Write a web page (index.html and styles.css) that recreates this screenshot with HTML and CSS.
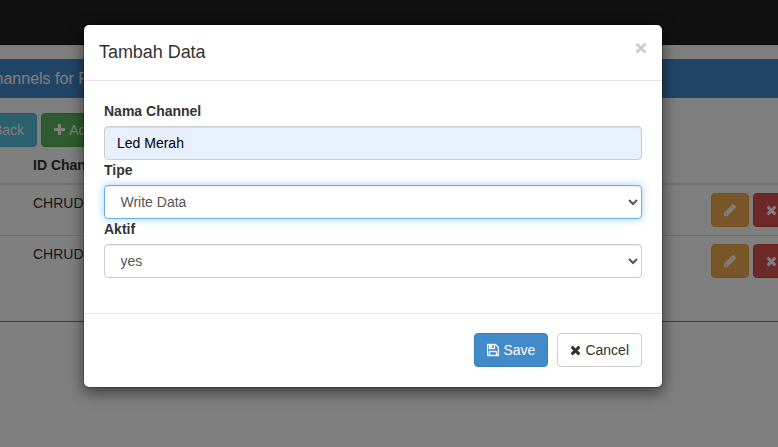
FILE: index.html
```
<!DOCTYPE html>
<html lang="id">
<head>
<meta charset="utf-8">
<title>Tambah Data</title>
<link rel="stylesheet" href="styles.css">
</head>
<body>
<svg class="sprite" aria-hidden="true">
  <symbol id="save" viewBox="0 0 1536 1792"><path d="M384 1536h768v-384h-768v384zm896 0h128v-896q0-14-10-38.500t-20-34.500l-281-281q-10-10-34-20t-39-10v416q0 40-28 68t-68 28h-576q-40 0-68-28t-28-68v-416h-128v1280h128v-416q0-40 28-68t68-28h832q40 0 68 28t28 68v416zm-384-928v-320q0-13-9.500-22.500t-22.500-9.500h-192q-13 0-22.500 9.500t-9.500 22.500v320q0 13 9.500 22.500t22.500 9.500h192q13 0 22.500-9.500t9.500-22.500zm640 32v928q0 40-28 68t-68 28h-1344q-40 0-68-28t-28-68v-1344q0-40 28-68t68-28h928q40 0 88 20t76 48l280 280q28 28 48 76t20 88z"/></symbol>
  <symbol id="times" viewBox="192 0 1408 1792"><path d="M1490 1322q0 40-28 68l-136 136q-28 28-68 28t-68-28l-294-294-294 294q-28 28-68 28t-68-28l-136-136q-28-28-28-68t28-68l294-294-294-294q-28-28-28-68t28-68l136-136q28-28 68-28t68 28l294 294 294-294q28-28 68-28t68 28l136 136q28 28 28 68t-28 68l-294 294 294 294q28 28 28 68z"/></symbol>
  <symbol id="plus" viewBox="192 0 1408 1792"><path d="M1600 736v192q0 40-28 68t-68 28h-416v416q0 40-28 68t-68 28h-192q-40 0-68-28t-28-68v-416h-416q-40 0-68-28t-28-68v-192q0-40 28-68t68-28h416v-416q0-40 28-68t68-28h192q40 0 68 28t28 68v416h416q40 0 68 28t28 68z"/></symbol>
  <symbol id="pencil" viewBox="128 0 1536 1792"><path d="M491 1536l91-91-235-235-91 91v107h128v128h107zm523-928q0-22-22-22-10 0-17 7l-542 542q-7 7-7 17 0 22 22 22 10 0 17-7l542-542q7-7 7-17zm-54-192l416 416-832 832h-416v-416zm683 96q0 53-37 90l-166 166-416-416 166-165q36-38 90-38 53 0 91 38l235 234q37 39 37 91z"/></symbol>
</svg>
<nav class="navbar"></nav>
<main class="page">
  <section class="panel">
    <h3 class="panel-heading">Channels for R</h3>
    <div class="panel-body">
      <div class="toolbar">
        <button class="btn btn-info">Back</button>
        <button class="btn btn-success"><svg class="icon"><use href="#plus"/></svg>Add</button>
      </div>
      <table class="table">
        <thead><tr><th class="col-no"></th><th>ID Channel</th><th class="col-action"></th></tr></thead>
        <tbody>
          <tr><td></td><td>CHRUD</td><td><div class="actions"><button class="btn btn-warning"><svg class="icon icon-wide icon-heavy"><use href="#pencil"/></svg></button><button class="btn btn-danger"><svg class="icon"><use href="#times"/></svg></button></div></td></tr>
          <tr><td></td><td>CHRUD</td><td><div class="actions"><button class="btn btn-warning"><svg class="icon icon-wide icon-heavy"><use href="#pencil"/></svg></button><button class="btn btn-danger"><svg class="icon"><use href="#times"/></svg></button></div></td></tr>
        </tbody>
      </table>
    </div>
  </section>
</main>
<div class="backdrop">
  <div class="modal">
    <header class="modal-header"><h4 class="modal-title">Tambah Data</h4><button class="close">×</button></header>
    <form class="modal-body">
      <label for="nama">Nama Channel</label>
      <input class="field autofilled" id="nama" type="text" value="Led Merah">
      <label for="tipe">Tipe</label>
      <select class="field focused" id="tipe"><option>Write Data</option></select>
      <label for="aktif">Aktif</label>
      <select class="field" id="aktif"><option>yes</option></select>
    </form>
    <footer class="modal-footer">
      <button class="btn btn-primary"><svg class="icon icon-wide icon-heavy"><use href="#save"/></svg>Save</button>
      <button class="btn btn-default"><svg class="icon"><use href="#times"/></svg>Cancel</button>
    </footer>
  </div>
</div>
</body>
</html>
```
FILE: styles.css
```
* { box-sizing: border-box; }
html, body { height: 100%; }
body {
  margin: 0;
  overflow: hidden;
  background: #fff;
  color: #333;
  font: 14px/20px "Liberation Sans", Arial, sans-serif;
}
button, input, select { font: inherit; }
.sprite { display: none; }
.icon { width: 11px; height: 14px; fill: currentColor; flex: none; }
.icon-wide { width: 12px; }
.icon-heavy { stroke: currentColor; stroke-width: 50px; }

.navbar { height: 45px; background: #222; border-bottom: 1px solid #080808; }

.page { width: 900px; margin: 14px 0 0 -32px; }
.panel { height: 263px; border: 1px solid #428bca; border-top: 0; }
.panel-heading {
  margin: 0;
  height: 39px;
  padding: 0 14px;
  background: #428bca;
  color: #fff;
  font-size: 16px;
  font-weight: normal;
  line-height: 39px;
}
.panel-body { padding: 15px 0 0; }
.toolbar { display: flex; gap: 4px; padding-left: 11px; }

.btn {
  display: inline-flex;
  align-items: center;
  gap: 4px;
  height: 34px;
  padding: 0 12px;
  border: 1px solid transparent;
  border-radius: 4px;
  color: #fff;
  white-space: nowrap;
}
.btn-info { background: #5bc0de; border-color: #46b8da; }
.btn-success { background: #5cb85c; border-color: #4cae4c; }
.btn-warning { background: #f0ad4e; border-color: #eea236; }
.btn-danger { background: #d9534f; border-color: #d43f3a; }
.btn-primary { background: #428bca; border-color: #357ebd; }
.btn-default { background: #fff; border-color: #ccc; color: #333; }

.table { width: 100%; table-layout: fixed; border-collapse: separate; border-spacing: 0; }
.table th { height: 38px; padding: 8px; text-align: left; border-bottom: 2px solid #ddd; }
.table td { height: 51px; padding: 8px; vertical-align: top; border-bottom: 1px solid #ddd; }
.table tr:last-child td { border-bottom: 0; }
.col-no { width: 56px; }
.col-action { width: 164px; }
.actions { display: flex; gap: 4px; }

.backdrop { position: absolute; inset: 0; background: rgba(0, 0, 0, .5); }
.modal {
  width: 580px;
  height: 364px;
  margin: 24px 0 0 83px;
  display: flex;
  flex-direction: column;
  background: #fff;
  background-clip: padding-box;
  border: 1px solid rgba(0, 0, 0, .2);
  border-radius: 6px;
  box-shadow: 0 5px 15px rgba(0, 0, 0, .5);
}
.modal-header {
  display: flex;
  justify-content: space-between;
  height: 56px;
  padding: 12px 15px 0;
  border-bottom: 1px solid #e5e5e5;
}
.modal-title { margin: 0; font-size: 18px; font-weight: 500; line-height: 30px; letter-spacing: -.05px; }
.close {
  height: 21px;
  padding: 0;
  border: 0;
  background: none;
  color: #000;
  opacity: .2;
  font-size: 21px;
  font-weight: bold;
  line-height: 21px;
  -webkit-text-stroke: .4px #000;
}
.modal-body { flex: 1; padding: 20px; }
.modal-body label { display: block; margin-bottom: 5px; font-weight: bold; }
.field {
  display: block;
  width: 100%;
  height: 34px;
  padding: 6px 12px;
  background: #fff;
  border: 1px solid #ccc;
  border-radius: 4px;
  color: #555;
  box-shadow: inset 0 1px 1px rgba(0, 0, 0, .075);
}
select.field { padding-left: 11.5px; }
.autofilled { background: #e8f0fe; color: #000; }
.focused {
  border-color: #66afe9;
  box-shadow: inset 0 1px 1px rgba(0, 0, 0, .075), 0 0 8px rgba(102, 175, 233, .6);
}
.modal-footer {
  display: flex;
  justify-content: flex-end;
  gap: 9px;
  padding: 19px 20px 20px;
  border-top: 1px solid #e5e5e5;
}
```
